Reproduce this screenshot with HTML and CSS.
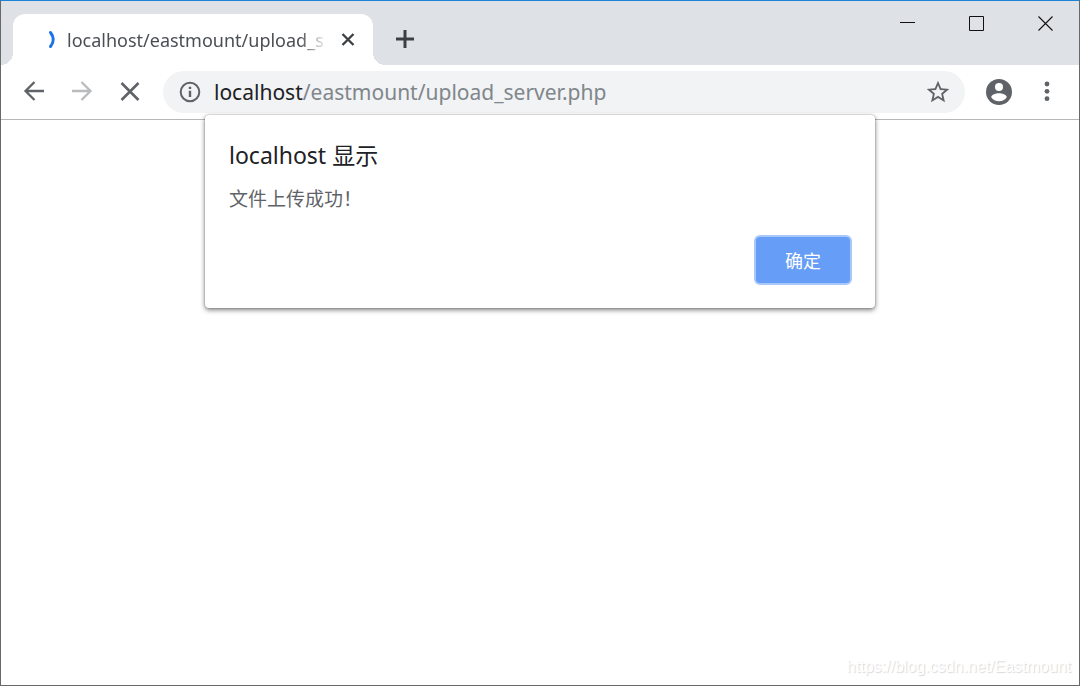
FILE: index.html
```html
<!DOCTYPE html>
<html lang="zh-CN">
<head>
<meta charset="utf-8">
<title>localhost/eastmount/upload_server.php</title>
<link rel="stylesheet" href="styles.css">
</head>
<body>
<div class="window">
  <header class="tabstrip">
    <div class="tab">
      <svg class="spinner" width="16" height="20" viewBox="0 0 16 20"><path d="M7.500 2.500Q13 9.500 7.500 16.500" fill="none" stroke="#1a73e8" stroke-width="3" stroke-linecap="round"/></svg>
      <span class="tab-title">localhost/eastmount/upload_s</span>
      <button class="icon-btn tab-close" aria-label="关闭标签页"><svg width="16" height="16" viewBox="0 0 16 16"><path d="M2.500 2l11 11M13.500 2l-11 11" stroke="#3c4043" stroke-width="2.300" fill="none"/></svg></button>
    </div>
    <button class="icon-btn new-tab" aria-label="新标签页"><svg width="20" height="20" viewBox="0 0 20 20"><path d="M10 0v18M1 9h18" stroke="#3c4043" stroke-width="3" fill="none"/></svg></button>
    <div class="window-controls">
      <button class="icon-btn" aria-label="最小化"><svg width="17" height="17" viewBox="0 0 17 17"><path d="M1 7.500h15" stroke="#111" fill="none"/></svg></button>
      <button class="icon-btn" aria-label="最大化"><svg width="17" height="17" viewBox="0 0 17 17"><path d="M1.500 1.500h14v14h-14z" stroke="#111" fill="none"/></svg></button>
      <button class="icon-btn" aria-label="关闭"><svg width="17" height="17" viewBox="0 0 17 17"><path d="M1.500 1.500l14 14M15.500 1.500l-14 14" stroke="#111" stroke-width="1.100" fill="none"/></svg></button>
    </div>
  </header>
  <div class="toolbar">
    <nav class="nav">
      <button class="icon-btn" aria-label="后退"><svg width="24" height="24" viewBox="0 0 24 24"><path d="M22 11H4M12.500 2l-9 9 9 9" stroke="#5f6368" stroke-width="2.300" fill="none"/></svg></button>
      <button class="icon-btn" aria-label="前进"><svg width="24" height="24" viewBox="0 0 24 24"><path d="M2 11h18M11.500 2l9 9-9 9" stroke="#b9bbbd" stroke-width="2.300" fill="none"/></svg></button>
      <button class="icon-btn" aria-label="停止"><svg width="24" height="24" viewBox="0 0 24 24"><path d="M3.500 3l17 17M20.500 3l-17 17" stroke="#5f6368" stroke-width="2.600" fill="none"/></svg></button>
    </nav>
    <div class="omnibox">
      <button class="icon-btn" aria-label="网站信息"><svg width="22" height="22" viewBox="0 0 22 22"><circle cx="11" cy="11" r="9.300" stroke="#5f6368" stroke-width="2" fill="none"/><path d="M11 9.800v6.200M11 5.800v2.200" stroke="#5f6368" stroke-width="2.400" fill="none"/></svg></button>
      <label class="url"><span class="host">localhost</span><input class="path" type="text" aria-label="地址" value="/eastmount/upload_server.php"></label>
      <button class="icon-btn" aria-label="收藏"><svg width="26" height="26" viewBox="0.500 0.500 23 23"><path d="M22 9.240l-7.190-.62L12 2 9.190 8.630 2 9.240l5.460 4.730L5.820 21 12 17.270 18.180 21l-1.630-7.030L22 9.240zM12 15.400l-3.760 2.270 1-4.280-3.320-2.880 4.380-.38L12 6.100l1.710 4.040 4.380.38-3.320 2.880 1 4.280L12 15.400z" fill="#5f6368"/></svg></button>
    </div>
    <div class="tools">
      <button class="icon-btn" aria-label="用户"><svg width="26" height="26" viewBox="0 0 26 26"><circle cx="13" cy="13" r="13" fill="#5f6368"/><circle cx="13" cy="8" r="4" fill="#fff"/><path d="M5.200 18.200C5.200 15.600 10.400 14.200 13 14.200s7.800 1.400 7.800 4C19.100 20.700 16.300 22.300 13 22.300s-6.100-1.600-7.800-4.100z" fill="#fff"/></svg></button>
      <button class="icon-btn" aria-label="菜单"><svg width="22" height="24" viewBox="0 0 22 24"><g fill="#5f6368"><circle cx="11" cy="4" r="2.400"/><circle cx="11" cy="11.300" r="2.400"/><circle cx="11" cy="18.700" r="2.400"/></g></svg></button>
    </div>
  </div>
  <main class="page">
    <section class="dialog" role="alertdialog" aria-labelledby="dialog-title" aria-describedby="dialog-text">
      <h1 class="dialog-title" id="dialog-title">localhost 显示</h1>
      <p class="dialog-text" id="dialog-text">文件上传成功！</p>
      <button class="confirm">确定</button>
    </section>
    <a class="watermark" href="https://blog.csdn.net/Eastmount">https://blog.csdn.net/Eastmount</a>
  </main>
</div>
</body>
</html>
```
FILE: styles.css
```css
* {
  box-sizing: border-box;
}

body {
  margin: 0;
  font-family: "Noto Sans", "Noto Sans CJK SC", sans-serif;
  background: #fff;
}

.window {
  display: flex;
  flex-direction: column;
  min-height: 100vh;
  border: 1px solid #66686b;
  border-top-color: #1883d7;
}

.icon-btn {
  display: flex;
  flex: none;
  align-items: center;
  justify-content: center;
  padding: 0;
  border: 0;
  background: none;
}

.tabstrip {
  display: flex;
  height: 64px;
  padding: 13px 0 0 12px;
  background: #dee1e6;
}

.tab {
  position: relative;
  display: flex;
  flex: 0 1 360px;
  align-items: center;
  min-width: 0;
  padding: 0 17px 0 30px;
  border-radius: 12px 12px 0 0;
  background: #fff;
}

.tab::before,
.tab::after {
  content: "";
  position: absolute;
  bottom: 0;
  width: 12px;
  height: 12px;
}

.tab::before {
  right: 100%;
  background: radial-gradient(circle at 0 0, transparent 12px, #fff 12px);
}

.tab::after {
  left: 100%;
  background: radial-gradient(circle at 100% 0, transparent 12px, #fff 12px);
}

.tab-title {
  flex: 1;
  overflow: hidden;
  margin: 0 12px 0 8px;
  font-size: 18px;
  line-height: 28px;
  white-space: nowrap;
  color: #4b4f54;
  mask-image: linear-gradient(to left, transparent, #000 28px);
}

.new-tab {
  width: 40px;
  margin-left: 12px;
}

.window-controls {
  display: flex;
  gap: 52px;
  height: 18px;
  margin-left: auto;
  padding-right: 25px;
}

.toolbar {
  display: flex;
  align-items: center;
  gap: 21px;
  padding: 6px 21px;
  border-bottom: 1px solid #b6b6b6;
}

.nav {
  display: flex;
  gap: 24px;
}

.omnibox {
  display: flex;
  flex: 1;
  align-items: center;
  gap: 13px;
  height: 42px;
  min-width: 0;
  padding: 0 14px 0 16px;
  border-radius: 21px;
  background: #f1f3f4;
}

.url {
  display: flex;
  flex: 1;
  min-width: 0;
  font-size: 21px;
  line-height: 32px;
}

.host {
  color: #202124;
}

.path {
  flex: 1;
  min-width: 0;
  padding: 0;
  border: 0;
  outline: 0;
  background: none;
  font: inherit;
  color: #80868b;
}

.tools {
  display: flex;
  align-items: center;
  gap: 24px;
}

.page {
  position: relative;
  display: flex;
  flex: 1;
  align-items: flex-end;
  justify-content: flex-end;
  padding: 6px 8px;
}

.dialog {
  position: absolute;
  top: -5px;
  left: 50%;
  display: flex;
  flex-direction: column;
  width: 670px;
  max-width: 100%;
  padding: 24px 23px 23px 24px;
  border-radius: 4px;
  background: #fff;
  box-shadow: 0 2px 5px rgba(0, 0, 0, 0.5), 0 0 2px rgba(0, 0, 0, 0.3);
  transform: translateX(-50%);
}

.dialog-title {
  margin: 0;
  font-size: 23px;
  font-weight: 400;
  line-height: 32px;
  color: #202124;
}

.dialog-text {
  margin: 12px 0 20px;
  font-size: 19px;
  line-height: 32px;
  color: #5f6368;
}

.confirm {
  align-self: flex-end;
  width: 98px;
  height: 50px;
  border: 2px solid #a9c8fa;
  border-radius: 6px;
  background: #669df6;
  font-family: inherit;
  font-size: 18px;
  color: #fff;
}

.watermark {
  font-family: "Liberation Sans", Arial, sans-serif;
  font-size: 16px;
  line-height: 24px;
  color: #fff;
  text-decoration: none;
  text-shadow: 1px 1px 1px #d8d8d8;
}
```
